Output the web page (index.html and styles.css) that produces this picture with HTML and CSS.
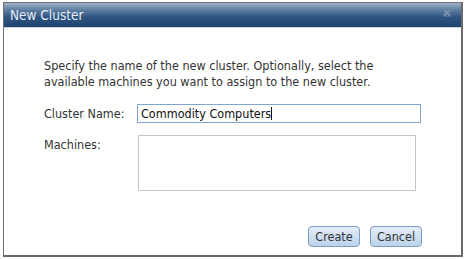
FILE: index.html
```html
<!DOCTYPE html>
<html>
<head>
<meta charset="utf-8">
<link rel="stylesheet" href="styles.css">
</head>
<body>
<div class="dialog">
  <div class="titlebar">
    <span class="title">New Cluster</span>
    <span class="close"><svg width="8" height="8" viewBox="0 0 8 8"><path d="M1 1L7 7M7 1L1 7" stroke="#7a8fab" stroke-width="2"/><rect x="0.5" y="0.5" width="7" height="7" fill="none" stroke="#5f7696" stroke-width="1" opacity="0.5"/></svg></span>
  </div>
  <div class="content">
    <p class="intro">Specify the name of the new cluster. Optionally, select the available machines you want to assign to the new cluster.</p>
    <div class="row">
      <label class="label">Cluster Name:</label>
      <div class="input">Commodity Computers<span class="caret"></span></div>
    </div>
    <div class="row row-machines">
      <label class="label">Machines:</label>
      <div class="listbox"></div>
    </div>
    <div class="actions">
      <button class="btn">Create</button>
      <button class="btn">Cancel</button>
    </div>
  </div>
</div>
</body>
</html>
```
FILE: styles.css
```css
html, body {
  margin: 0;
  padding: 0;
  background: #fff;
}
body {
  padding: 2px 0 0 3px;
  font-family: "DejaVu Sans Condensed", "DejaVu Sans", Verdana, sans-serif;
  font-stretch: condensed;
  font-size: 12.5px;
  color: #333;
}
.dialog {
  width: 457px;
  height: 252px;
  border: 1px solid #6f6f6f;
  border-right: 2px solid #6a6a6a;
  border-bottom: 2px solid #6a6a6a;
  display: flex;
  flex-direction: column;
  background: #fff;
}
.titlebar {
  height: 24px;
  background: linear-gradient(to bottom, #9db0c6 0%, #5c7ca0 30%, #2e5380 60%, #1e4470 100%);
  display: flex;
  align-items: center;
  justify-content: space-between;
  padding: 0 10px 0 6px;
  border-bottom: 1px solid #c8d4e2;
}
.title {
  color: #e4ecf5;
  font-size: 13.5px;
}
.close {
  display: flex;
  margin-top: -5px;
}
.content {
  padding: 30px 0 0 40px;
  display: flex;
  flex-direction: column;
  flex: 1;
}
.intro {
  margin: 0;
  line-height: 16px;
  width: 340px;
}
.row {
  display: flex;
  align-items: flex-start;
  margin-top: 14px;
}
.label {
  width: 93px;
  line-height: 19px;
}
.input {
  width: 279px;
  height: 17px;
  line-height: 17px;
  border: 1px solid #7fa7cc;
  padding-left: 3px;
  color: #111;
  display: flex;
  align-items: center;
}
.caret {
  display: inline-block;
  width: 1px;
  height: 13px;
  background: #111;
}
.row-machines {
  margin-top: 12px;
}
.row-machines .label {
  line-height: 14px;
  padding-top: 3px;
}
.listbox {
  width: 276px;
  height: 54px;
  border: 1px solid #c6c6c6;
  margin-left: 1px;
}
.actions {
  display: flex;
  justify-content: flex-end;
  gap: 10px;
  margin-top: 35px;
  padding-right: 39px;
}
.btn {
  width: 52px;
  height: 21px;
  border: 1px solid #7c9dc2;
  border-radius: 4px;
  background: linear-gradient(to bottom, #e4eef8 0%, #cfe0f1 50%, #bcd3ea 100%);
  font-family: "DejaVu Sans Condensed", "DejaVu Sans", Verdana, sans-serif;
  font-stretch: condensed;
  font-size: 12.5px;
  color: #333;
  padding: 0;
}
```
